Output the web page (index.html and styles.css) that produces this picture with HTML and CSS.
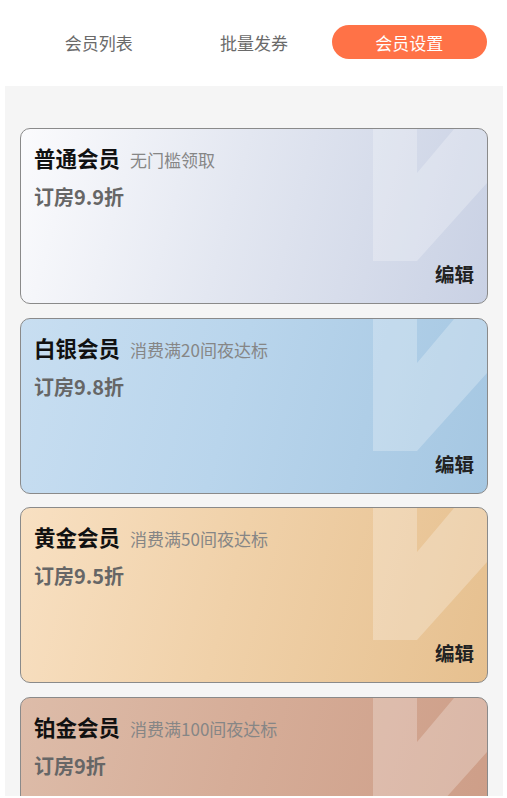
FILE: index.html
```html
<!DOCTYPE html>
<html lang="zh-CN">
<head>
<meta charset="utf-8">
<title>会员设置</title>
<link rel="stylesheet" href="styles.css">
</head>
<body>
<div class="header">
  <div class="tabs">
    <div class="tab">会员列表</div>
    <div class="tab">批量发券</div>
    <div class="tab active">会员设置</div>
  </div>
</div>
<div class="content">
  <div class="card card-normal">
    <svg class="deco" viewBox="0 0 114 132" preserveAspectRatio="none"><polygon points="0,0 44,0 44,44 81,0 114,0 114,54 44,132 0,132"/></svg>
    <div class="title-row"><span class="title">普通会员</span><span class="sub">无门槛领取</span></div>
    <div class="discount">订房9.9折</div>
    <div class="edit">编辑</div>
  </div>
  <div class="card card-silver">
    <svg class="deco" viewBox="0 0 114 132" preserveAspectRatio="none"><polygon points="0,0 44,0 44,44 81,0 114,0 114,54 44,132 0,132"/></svg>
    <div class="title-row"><span class="title">白银会员</span><span class="sub">消费满20间夜达标</span></div>
    <div class="discount">订房9.8折</div>
    <div class="edit">编辑</div>
  </div>
  <div class="card card-gold">
    <svg class="deco" viewBox="0 0 114 132" preserveAspectRatio="none"><polygon points="0,0 44,0 44,44 81,0 114,0 114,54 44,132 0,132"/></svg>
    <div class="title-row"><span class="title">黄金会员</span><span class="sub">消费满50间夜达标</span></div>
    <div class="discount">订房9.5折</div>
    <div class="edit">编辑</div>
  </div>
  <div class="card card-platinum">
    <svg class="deco" viewBox="0 0 114 132" preserveAspectRatio="none"><polygon points="0,0 44,0 44,44 81,0 114,0 114,54 44,132 0,132"/></svg>
    <div class="title-row"><span class="title">铂金会员</span><span class="sub">消费满100间夜达标</span></div>
    <div class="discount">订房9折</div>
  </div>
</div>
</body>
</html>
```
FILE: styles.css
```css
* { box-sizing: border-box; }
html, body {
  margin: 0;
  padding: 0;
  background: #ffffff;
  font-family: "Noto Sans CJK SC", "Noto Sans", sans-serif;
  height: 798px;
  overflow: hidden;
}
.header {
  height: 86px;
  padding: 25px 20px 0 21px;
}
.tabs {
  display: grid;
  grid-template-columns: 1fr 1fr 1fr;
  height: 34px;
}
.tab {
  display: flex;
  align-items: center;
  justify-content: center;
  font-size: 17px;
  color: #6a6a6a;
  border-radius: 17px;
}
.tab.active {
  background: #ff7247;
  color: #ffffff;
}
.content {
  margin: 0 4px 0 5px;
  background: #f5f5f5;
  height: 710px;
  padding: 42px 15px 0 15px;
  display: flex;
  flex-direction: column;
  gap: 13.5px;
  overflow: hidden;
}
.card {
  position: relative;
  flex: 0 0 176px;
  height: 176px;
  border: 1px solid #8a8a8a;
  border-radius: 10px;
  overflow: hidden;
  display: flex;
  flex-direction: column;
  padding: 14px 13px 16px 13px;
}
.deco {
  position: absolute;
  top: 0;
  right: 0;
  width: 114px;
  height: 132px;
}
.deco polygon {
  fill: #ffffff;
  fill-opacity: 0.26;
}
.card-normal { background: linear-gradient(105deg, #fbfbfd 0%, #e3e7f1 45%, #c9d1e4 100%); }
.card-silver { background: linear-gradient(105deg, #c8def1 0%, #b9d5ec 45%, #a5c7e2 100%); }
.card-gold { background: linear-gradient(105deg, #f8e0c2 0%, #f0d1a9 45%, #e6c08f 100%); }
.card-platinum { background: linear-gradient(105deg, #ddbca9 0%, #d6ad98 45%, #cd9d87 100%); }
.title-row {
  position: relative;
  display: flex;
  align-items: baseline;
  gap: 10px;
  line-height: 30px;
}
.title {
  font-size: 21.5px;
  font-weight: 700;
  color: #111111;
}
.sub {
  font-size: 17px;
  color: #868686;
}
.discount {
  position: relative;
  margin-top: 8px;
  font-size: 20px;
  font-weight: 700;
  color: #666666;
  line-height: 28px;
}
.edit {
  position: relative;
  margin-top: auto;
  align-self: flex-end;
  font-size: 19.5px;
  font-weight: 700;
  color: #222222;
  line-height: 26px;
}
```
